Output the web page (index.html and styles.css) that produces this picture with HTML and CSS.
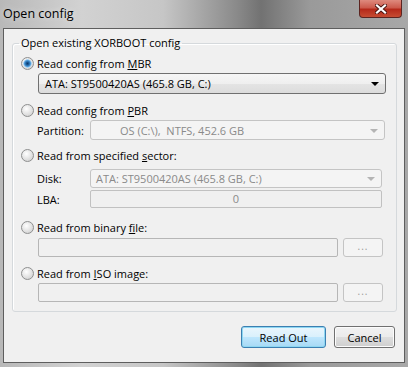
FILE: index.html
```html
<!DOCTYPE html>
<html lang="en">
<head>
    <meta charset="UTF-8">
    <title>Open config</title>
    <link rel="stylesheet" href="styles.css">
</head>
<body>
    <div class="window">
        <div class="titlebar">
            <span class="title">Open config</span>
            <span class="close">
                <svg width="12" height="10" viewBox="0 0 12 10">
                    <path d="M2 1.5 L10 8.5 M10 1.5 L2 8.5" stroke="#4a1410" stroke-width="4" stroke-linecap="square"/>
                    <path d="M2 1.5 L10 8.5 M10 1.5 L2 8.5" stroke="#ffffff" stroke-width="2.2" stroke-linecap="square"/>
                </svg>
            </span>
        </div>

        <div class="client">
            <fieldset class="group">
                <legend>Open existing XORBOOT config</legend>

                <label class="radio r-mbr"><span class="dot checked"></span><span>Read config from <u>M</u>BR</span></label>
                <div class="combo combo-mbr">
                    <span>ATA: ST9500420AS (465.8 GB, C:)</span>
                    <span class="arrow"></span>
                </div>

                <label class="radio r-pbr"><span class="dot"></span><span>Read config from <u>P</u>BR</span></label>
                <div class="field-row row-part">
                    <span class="label">Partition:</span>
                    <div class="combo disabled combo-part">
                        <span>OS (C:\), &nbsp;NTFS, 452.6 GB</span>
                        <span class="arrow"></span>
                    </div>
                </div>

                <label class="radio r-sector"><span class="dot"></span><span>Read from specified <u>s</u>ector:</span></label>
                <div class="field-row row-disk">
                    <span class="label">Disk:</span>
                    <div class="combo disabled combo-disk">
                        <span>ATA: ST9500420AS (465.8 GB, C:)</span>
                        <span class="arrow"></span>
                    </div>
                </div>
                <div class="field-row row-lba">
                    <span class="label">LBA:</span>
                    <div class="edit disabled lba">0</div>
                </div>

                <label class="radio r-file"><span class="dot"></span><span>Read from binary <u>f</u>ile:</span></label>
                <div class="file-row row-file">
                    <div class="edit disabled path"></div>
                    <div class="browse">...</div>
                </div>

                <label class="radio r-iso"><span class="dot"></span><span>Read from <u>I</u>SO image:</span></label>
                <div class="file-row row-iso">
                    <div class="edit disabled path"></div>
                    <div class="browse">...</div>
                </div>
            </fieldset>

            <div class="buttons">
                <button class="btn default">Read Out</button>
                <button class="btn cancel">Cancel</button>
            </div>
        </div>
    </div>
</body>
</html>
```

FILE: styles.css
```css
body {
    margin: 0;
    font-family: "Open Sans", "Noto Sans", sans-serif;
    font-size: 11px;
    color: #000;
}

.window {
    width: 408px;
    height: 367px;
    box-sizing: border-box;
    padding: 0 3px 4px 3px;
    display: flex;
    flex-direction: column;
    background: linear-gradient(90deg, #b8b8b8 0%, #d2d2d2 20%, #c6c6c6 40%, #8a8a8a 58%, #727272 64%, #9a9a9a 76%, #a8a8a8 100%);
}

.titlebar {
    height: 28px;
    display: flex;
    justify-content: space-between;
    align-items: flex-start;
    margin-right: 3px;
}

.title {
    margin-top: 5px;
    font-size: 12.5px;
    color: #000;
    text-shadow: 0 0 6px rgba(255, 255, 255, 0.6);
}

.close {
    width: 43px;
    height: 18px;
    box-sizing: border-box;
    border: 1px solid #5c2420;
    border-top: none;
    border-radius: 0 0 4px 4px;
    background: linear-gradient(#de8a7e 0%, #cc5a4c 45%, #b5291a 55%, #c64c32 100%);
    display: flex;
    align-items: center;
    justify-content: center;
}

.client {
    flex: 1;
    background: #f0f0f0;
    border: 1px solid #5e5e5e;
    display: flex;
    flex-direction: column;
}

.group {
    margin: 6px 7px 0 8px;
    padding: 0 0 9px 0;
    border: 1px solid #d5d9dc;
    border-radius: 3px;
    min-width: 0;
    box-shadow: inset 1px 1px 0 #fff;
}

.group legend {
    margin-left: 6px;
    padding: 0 2px;
    line-height: 16px;
}

.radio {
    display: flex;
    align-items: center;
    height: 16px;
    padding-left: 8px;
    gap: 3px;
}

.dot {
    width: 13px;
    height: 13px;
    box-sizing: border-box;
    border-radius: 50%;
    border: 1px solid #8e8f8f;
    background: radial-gradient(circle at 40% 35%, #ffffff 0%, #e4e4e4 50%, #c9c9c9 100%);
}

.dot.checked {
    background:
        radial-gradient(circle at 50% 50%, #0d3b6a 0, #1f5e9c 1.5px, #4c9ad8 3px, #a8d2f2 4px, transparent 4.5px),
        radial-gradient(circle at 40% 35%, #ffffff 0%, #e4e4e4 50%, #c9c9c9 100%);
}

.r-mbr { margin-top: 4px; }
.r-pbr { margin-top: 8px; }
.r-sector { margin-top: 7px; }
.r-file { margin-top: 11px; }
.r-iso { margin-top: 8px; }

.combo {
    display: flex;
    align-items: center;
    justify-content: space-between;
    box-sizing: border-box;
    border: 1px solid #707070;
    border-radius: 3px;
    background: linear-gradient(#f6f6f6 0%, #efefef 50%, #e4e4e4 51%, #dcdcdc 100%);
    padding: 0 6px 0 6px;
}

.combo-mbr {
    margin: 2px 0 0 25px;
    width: 348px;
    height: 21px;
}

.arrow {
    width: 0;
    height: 0;
    border-left: 4px solid transparent;
    border-right: 4px solid transparent;
    border-top: 4px solid #000;
    margin-top: 1px;
}

.combo.disabled {
    border-color: #c4c4c4;
    background: #f4f4f4;
    color: #8a8a8a;
}

.combo.disabled .arrow {
    border-top-color: #b4b4b4;
}

.field-row {
    display: flex;
    align-items: center;
    padding-left: 24px;
}

.label {
    width: 53px;
}

.row-part { margin-top: 2px; height: 20px; }
.row-disk { margin-top: 6px; height: 19px; }
.row-lba { margin-top: 2px; height: 18px; }

.combo-part {
    width: 295px;
    height: 20px;
    padding-left: 29px;
}

.combo-disk {
    width: 292px;
    height: 19px;
    padding-left: 5px;
}

.edit {
    box-sizing: border-box;
    border: 1px solid #c1c1c1;
    border-radius: 2px;
    background: #f0f0f0;
}

.lba {
    width: 292px;
    height: 18px;
    text-align: center;
    line-height: 16px;
    color: #8a8a8a;
}

.file-row {
    display: flex;
    gap: 5px;
    padding-left: 25px;
    height: 19px;
}

.row-file { margin-top: 3px; }
.row-iso { margin-top: 2px; }

.path {
    width: 300px;
    height: 19px;
    border-color: #b6b6b6;
}

.browse {
    width: 40px;
    height: 19px;
    box-sizing: border-box;
    border: 1px solid #c4c4c4;
    border-radius: 3px;
    background: #f4f4f4;
    color: #9a9a9a;
    text-align: center;
    line-height: 15px;
    font-size: 10px;
    letter-spacing: 1px;
}

.buttons {
    display: flex;
    justify-content: flex-end;
    gap: 8px;
    margin-top: 14px;
    padding-right: 9px;
}

.btn {
    height: 22px;
    box-sizing: border-box;
    border-radius: 3px;
    font-family: inherit;
    font-size: 11px;
    color: #000;
    padding: 0;
}

.btn.default {
    width: 85px;
    border: 1px solid #3c7fb1;
    background: linear-gradient(#eaf6fd 0%, #d9f0fc 50%, #bee6fd 51%, #a7d9f5 100%);
    box-shadow: inset 0 0 0 1px #8ed7f2;
}

.btn.cancel {
    width: 61px;
    border: 1px solid #707070;
    background: linear-gradient(#f2f2f2 0%, #ebebeb 50%, #dddddd 51%, #cfcfcf 100%);
    box-shadow: inset 0 0 0 1px #fcfcfc;
}
```
